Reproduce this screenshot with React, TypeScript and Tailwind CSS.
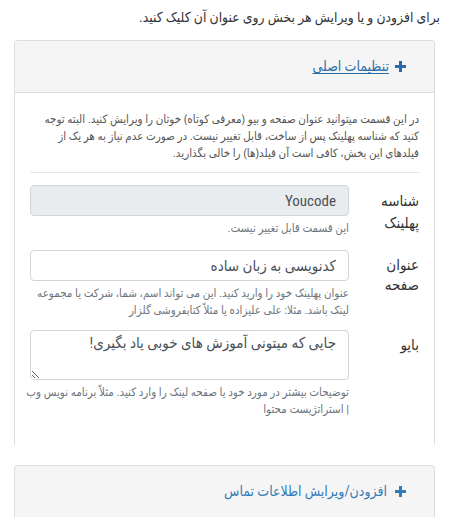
import React from "react";

const FONT = 'Roboto, "DejaVu Sans Condensed", "DejaVu Sans", sans-serif';

function Plus({ color }: { color: string }) {
  return (
    <svg width="11" height="11" viewBox="0 0 11 11" className="shrink-0">
      <rect x="4" y="0" width="3" height="11" fill={color} />
      <rect x="0" y="4" width="11" height="3" fill={color} />
    </svg>
  );
}

export default function App() {
  return (
    <div
      dir="rtl"
      className="w-[450px] h-[527px] bg-white overflow-hidden text-[#333]"
      style={{ fontFamily: FONT, fontStretch: "semi-condensed" }}
    >
      <p className="pr-[10px] pt-[7px] text-[13.8px] leading-[20px] text-[#333]">
        برای افزودن و یا ویرایش هر بخش روی عنوان آن کلیک کنید.
      </p>

      <div className="mt-[13px] mr-[15px] ml-[14px] h-[405px] border border-b-0 border-[#ddd] rounded-t-[4px] overflow-hidden">
        <div className="h-[52px] bg-[#f5f5f5] border-b border-[#ddd] flex items-center pr-[28px]">
          <a className="flex items-center gap-[6px] text-[14px] text-[#2a6ca8] underline underline-offset-2">
            <Plus color="#2a6ca8" />
            <span>تنظیمات اصلی</span>
          </a>
        </div>
        <div className="px-[15px] pt-[18px]">
          <p className="text-[11.5px] leading-[17px] text-[#555] whitespace-nowrap">
            در این قسمت میتوانید عنوان صفحه و بیو (معرفی کوتاه) خوتان را ویرایش کنید. البته توجه
            <br />
            کنید که شناسه پهلینک پس از ساخت، قابل تغییر نیست. در صورت عدم نیاز به هر یک از
            <br />
            فیلدهای این بخش، کافی است آن فیلد(ها) را خالی بگذارید.
          </p>
          <hr className="mt-[10px] border-[#e5e5e5]" />

          <div className="mt-[12px] flex gap-[22px]">
            <label className="w-[48px] shrink-0 pt-[5px] text-[15px] leading-[22px] text-[#333]">
              شناسه پهلینک
            </label>
            <div className="w-[319px]">
              <input
                readOnly
                disabled
                value="Youcode"
                className="w-full h-[31px] px-[12px] rounded-[4px] border border-[#ced4da] bg-[#e9ecef] text-[15px] text-[#495057] text-right"
              />
              <div className="mt-[4px] text-[11.5px] leading-[17px] text-[#6c757d]">
                این قسمت قابل تغییر نیست.
              </div>
            </div>
          </div>

          <div className="mt-[13px] flex gap-[22px]">
            <label className="w-[48px] shrink-0 pt-[5px] text-[15px] leading-[20px] text-[#333]">
              عنوان صفحه
            </label>
            <div className="w-[319px]">
              <input
                readOnly
                value="کدنویسی به زبان ساده"
                className="w-full h-[31px] px-[12px] rounded-[4px] border border-[#ced4da] bg-white text-[15px] text-[#495057] text-right outline-none"
              />
              <div className="mt-[4px] text-[11.5px] leading-[17px] text-[#6c757d] whitespace-nowrap">
                عنوان پهلینک خود را وارید کنید. این می تواند اسم، شما، شرکت یا مجموعه
                <br />
                لینک باشد. مثلا: علی علیزاده یا مثلاً کتابفروشی گلزار
              </div>
            </div>
          </div>

          <div className="mt-[11px] flex gap-[22px]">
            <label className="w-[48px] shrink-0 pt-[5px] text-[15px] leading-[20px] text-[#333]">
              بایو
            </label>
            <div className="w-[319px]">
              <textarea
                readOnly
                defaultValue="جایی که میتونی آموزش های خوبی یاد بگیری!"
                className="block w-full h-[50px] px-[12px] pt-[1px] pb-[4px] rounded-[4px] border border-[#ced4da] bg-white text-[15px] leading-[22px] text-[#495057] outline-none"
              />
              <div className="mt-[4px] text-[11.5px] leading-[17px] text-[#6c757d] whitespace-nowrap">
                توضیحات بیشتر در مورد خود یا صفحه لینک را وارد کنید. مثلاً برنامه نویس وب
                <br />
                | استراتژیست محتوا
              </div>
            </div>
          </div>
        </div>
      </div>

      <div className="mt-[20px] mr-[15px] ml-[14px] h-[52px] bg-[#f5f5f5] border border-b-0 border-[#ddd] rounded-t-[4px] flex items-center pr-[28px]">
        <a className="flex items-center gap-[8px] text-[14px] text-[#337ab7]">
          <Plus color="#337ab7" />
          <span>افزودن/ویرایش اطلاعات تماس</span>
        </a>
      </div>
    </div>
  );
}
